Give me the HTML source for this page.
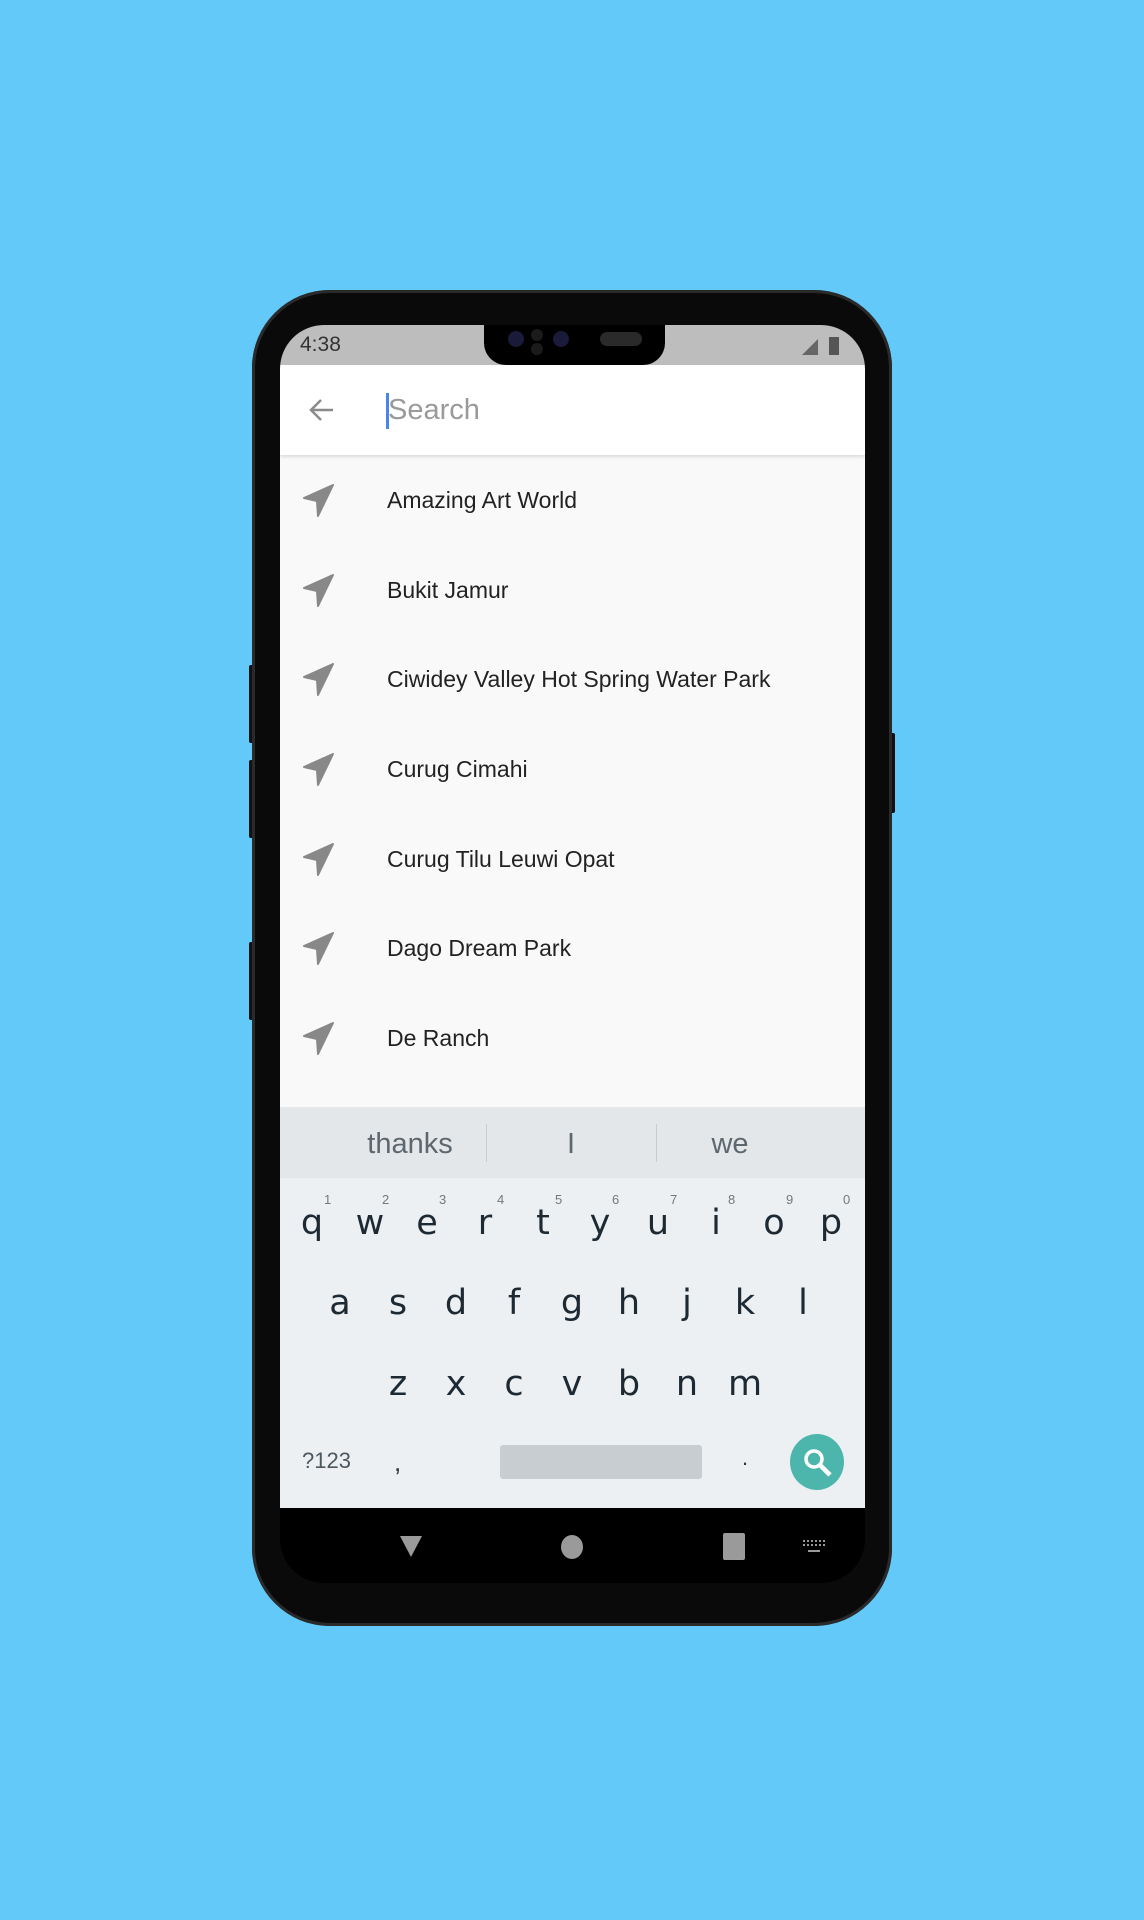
<!DOCTYPE html>
<html><head><meta charset="utf-8"><style>
*{margin:0;padding:0;box-sizing:border-box}
body{width:1144px;height:1920px;background:#62c9f8;position:relative;overflow:hidden;font-family:"Liberation Sans",sans-serif}
.abs{position:absolute}
.phone{left:252px;top:290px;width:640px;height:1336px;background:#0a0a0a;border-radius:78px;box-shadow:0 0 0 3px #2a2a2a inset}
.screen{left:280px;top:325px;width:585px;height:1258px;background:#000;border-radius:44px;overflow:hidden}
.row{position:absolute;left:0;width:585px;height:90px}
.row .t{position:absolute;left:107px;top:0;line-height:90px;font-size:23px;color:#222}
.row svg{position:absolute;left:23px;top:29px}
.k{position:absolute;font-size:35px;color:#1d2a33;width:40px;text-align:center;font-family:"DejaVu Sans","Liberation Sans",sans-serif}
.n{position:absolute;font-size:13px;color:#777}
</style></head><body>
<div class="abs" style="left:249px;top:665px;width:5px;height:78px;background:#111;border-radius:2px"></div>
<div class="abs" style="left:249px;top:760px;width:5px;height:78px;background:#111;border-radius:2px"></div>
<div class="abs" style="left:249px;top:942px;width:5px;height:78px;background:#111;border-radius:2px"></div>
<div class="abs" style="left:890px;top:733px;width:5px;height:80px;background:#111;border-radius:2px"></div>
<div class="abs phone"></div>
<div class="abs screen">
  <div class="abs" style="left:0;top:0;width:585px;height:40px;background:#bdbdbd"></div>
  <div class="abs" style="left:204px;top:0;width:181px;height:40px;background:#000;border-radius:0 0 22px 22px"></div>
  <div class="abs" style="left:228px;top:6px;width:16px;height:16px;background:#1a1a3a;border-radius:50%"></div>
  <div class="abs" style="left:251px;top:4px;width:12px;height:12px;background:#1b1b1b;border-radius:50%"></div>
  <div class="abs" style="left:251px;top:18px;width:12px;height:12px;background:#1b1b1b;border-radius:50%"></div>
  <div class="abs" style="left:273px;top:6px;width:16px;height:16px;background:#1a1a3a;border-radius:50%"></div>
  <div class="abs" style="left:320px;top:7px;width:42px;height:14px;background:#2a2a2a;border-radius:7px"></div>
  <div class="abs" style="left:20px;top:8px;font-size:21px;color:#333">4:38</div>
  <svg class="abs" style="left:522px;top:10px" width="40" height="20"><path d="M0 20L16 4V20Z" fill="#666"/><rect x="27" y="2" width="10" height="18" fill="#555"/></svg>
  <div class="abs" style="left:0;top:40px;width:585px;height:90px;background:#fff;box-shadow:0 2px 3px rgba(0,0,0,.12);z-index:2"></div>
  <svg class="abs" style="left:27px;top:72px;z-index:3" width="30" height="26"><path d="M26 13H4M14 3L4 13L14 23" stroke="#8a8a8a" stroke-width="2.5" fill="none"/></svg>
  <div class="abs" style="left:106px;top:68px;width:3px;height:36px;background:#4a86e8;z-index:3"></div>
  <div class="abs" style="left:108px;top:69px;font-size:29px;color:#9a9a9a;z-index:3">Search</div>
  <div class="abs" style="left:0;top:130px;width:585px;height:653px;background:#f9f9f9">
    <div class="row" style="top:0px"><svg width="32" height="34" viewBox="0 0 32 34"><path d="M30 1L1 14L14 17L15 32Z" fill="#888" stroke="#888" stroke-width="2" stroke-linejoin="round"/></svg><div class="t">Amazing Art World</div></div>
    <div class="row" style="top:90px"><svg width="32" height="34" viewBox="0 0 32 34"><path d="M30 1L1 14L14 17L15 32Z" fill="#888" stroke="#888" stroke-width="2" stroke-linejoin="round"/></svg><div class="t">Bukit Jamur</div></div>
    <div class="row" style="top:179px"><svg width="32" height="34" viewBox="0 0 32 34"><path d="M30 1L1 14L14 17L15 32Z" fill="#888" stroke="#888" stroke-width="2" stroke-linejoin="round"/></svg><div class="t">Ciwidey Valley Hot Spring Water Park</div></div>
    <div class="row" style="top:269px"><svg width="32" height="34" viewBox="0 0 32 34"><path d="M30 1L1 14L14 17L15 32Z" fill="#888" stroke="#888" stroke-width="2" stroke-linejoin="round"/></svg><div class="t">Curug Cimahi</div></div>
    <div class="row" style="top:359px"><svg width="32" height="34" viewBox="0 0 32 34"><path d="M30 1L1 14L14 17L15 32Z" fill="#888" stroke="#888" stroke-width="2" stroke-linejoin="round"/></svg><div class="t">Curug Tilu Leuwi Opat</div></div>
    <div class="row" style="top:448px"><svg width="32" height="34" viewBox="0 0 32 34"><path d="M30 1L1 14L14 17L15 32Z" fill="#888" stroke="#888" stroke-width="2" stroke-linejoin="round"/></svg><div class="t">Dago Dream Park</div></div>
    <div class="row" style="top:538px"><svg width="32" height="34" viewBox="0 0 32 34"><path d="M30 1L1 14L14 17L15 32Z" fill="#888" stroke="#888" stroke-width="2" stroke-linejoin="round"/></svg><div class="t">De Ranch</div></div>
  </div>
  <!-- keyboard -->
  <div class="abs" style="left:0;top:782px;width:585px;height:71px;background:#e4e7ea"></div>
  <div class="abs" style="left:0;top:853px;width:585px;height:330px;background:#edf0f3"></div>
  <div class="abs" style="left:206px;top:799px;width:1px;height:38px;background:#c8ccd0"></div>
  <div class="abs" style="left:376px;top:799px;width:1px;height:38px;background:#c8ccd0"></div>
  <div class="abs" style="left:70px;top:803px;width:120px;text-align:center;font-size:29px;color:#5d676e">thanks</div>
  <div class="abs" style="left:284px;top:803px;width:14px;text-align:center;font-size:29px;color:#5d676e">I</div>
  <div class="abs" style="left:400px;top:803px;width:100px;text-align:center;font-size:29px;color:#5d676e">we</div>
  <!-- row1 -->
  <div class="k" style="left:12px;top:878px">q</div><div class="n" style="left:44px;top:867px">1</div>
  <div class="k" style="left:70px;top:878px">w</div><div class="n" style="left:102px;top:867px">2</div>
  <div class="k" style="left:127px;top:878px">e</div><div class="n" style="left:159px;top:867px">3</div>
  <div class="k" style="left:185px;top:878px">r</div><div class="n" style="left:217px;top:867px">4</div>
  <div class="k" style="left:243px;top:878px">t</div><div class="n" style="left:275px;top:867px">5</div>
  <div class="k" style="left:300px;top:878px">y</div><div class="n" style="left:332px;top:867px">6</div>
  <div class="k" style="left:358px;top:878px">u</div><div class="n" style="left:390px;top:867px">7</div>
  <div class="k" style="left:416px;top:878px">i</div><div class="n" style="left:448px;top:867px">8</div>
  <div class="k" style="left:474px;top:878px">o</div><div class="n" style="left:506px;top:867px">9</div>
  <div class="k" style="left:531px;top:878px">p</div><div class="n" style="left:563px;top:867px">0</div>
  <!-- row2 -->
  <div class="k" style="left:40px;top:958px">a</div>
  <div class="k" style="left:98px;top:958px">s</div>
  <div class="k" style="left:156px;top:958px">d</div>
  <div class="k" style="left:214px;top:958px">f</div>
  <div class="k" style="left:272px;top:958px">g</div>
  <div class="k" style="left:329px;top:958px">h</div>
  <div class="k" style="left:387px;top:958px">j</div>
  <div class="k" style="left:445px;top:958px">k</div>
  <div class="k" style="left:503px;top:958px">l</div>
  <!-- row3 -->
  <div class="k" style="left:98px;top:1039px">z</div>
  <div class="k" style="left:156px;top:1039px">x</div>
  <div class="k" style="left:214px;top:1039px">c</div>
  <div class="k" style="left:272px;top:1039px">v</div>
  <div class="k" style="left:329px;top:1039px">b</div>
  <div class="k" style="left:387px;top:1039px">n</div>
  <div class="k" style="left:445px;top:1039px">m</div>
  <!-- row4 -->
  <div class="abs" style="left:22px;top:1123px;font-size:22px;color:#4d575e">?123</div>
  <div class="abs" style="left:114px;top:1122px;font-size:26px;color:#333">,</div>
  <div class="abs" style="left:220px;top:1120px;width:202px;height:34px;background:#c8cdd1;border-radius:3px"></div>
  <div class="abs" style="left:462px;top:1120px;font-size:22px;color:#333">.</div>
  <div class="abs" style="left:510px;top:1109px;width:54px;height:56px;background:#4db6ac;border-radius:50%"></div>
  <svg class="abs" style="left:522px;top:1122px" width="32" height="32"><circle cx="12" cy="12" r="8" stroke="#fff" stroke-width="3.5" fill="none"/><path d="M18 18L28 28" stroke="#fff" stroke-width="4.5"/></svg>
  <!-- nav -->
  <svg class="abs" style="left:119px;top:1209px" width="24" height="24"><path d="M1 2H23L12 23Z" fill="#9a9a9a"/></svg>
  <div class="abs" style="left:281px;top:1210px;width:22px;height:24px;background:#9a9a9a;border-radius:50%"></div>
  <div class="abs" style="left:443px;top:1208px;width:22px;height:27px;background:#9a9a9a;border-radius:2px"></div>
  <svg class="abs" style="left:522px;top:1214px" width="24" height="16"><g fill="#9a9a9a"><rect x="1" y="1" width="2" height="2"/><rect x="5" y="1" width="2" height="2"/><rect x="9" y="1" width="2" height="2"/><rect x="13" y="1" width="2" height="2"/><rect x="17" y="1" width="2" height="2"/><rect x="21" y="1" width="2" height="2"/><rect x="1" y="5" width="2" height="2"/><rect x="5" y="5" width="2" height="2"/><rect x="9" y="5" width="2" height="2"/><rect x="13" y="5" width="2" height="2"/><rect x="17" y="5" width="2" height="2"/><rect x="21" y="5" width="2" height="2"/><rect x="6" y="11" width="12" height="2"/></g></svg>
</div>
</body></html>
